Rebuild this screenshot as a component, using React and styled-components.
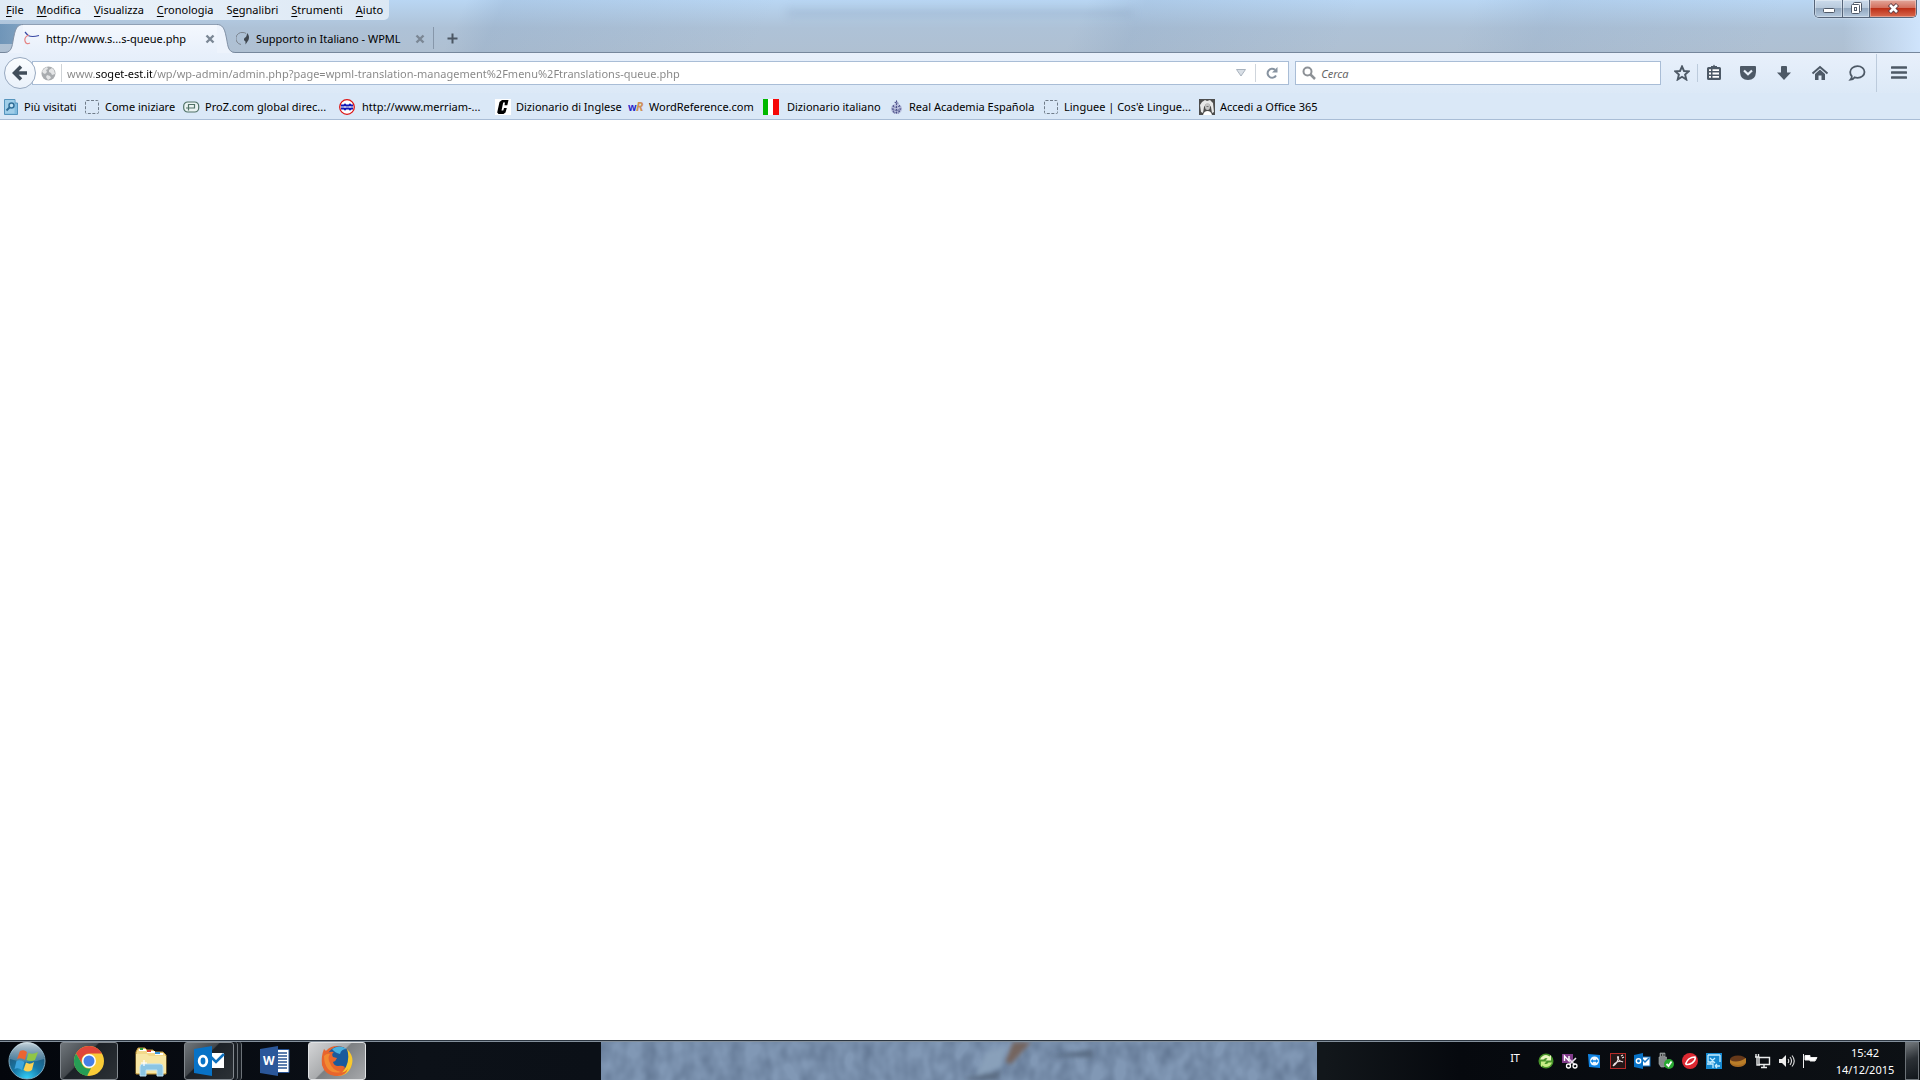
import React, { useState } from "react";
import styled, { createGlobalStyle } from "styled-components";

const GlobalStyle = createGlobalStyle`
  * { box-sizing: border-box; }
  body {
    margin: 0;
    font-family: "Noto Sans", "Open Sans", sans-serif;
    font-size: 11px;
    line-height: 16px;
    color: #000;
  }
  button, input {
    font: inherit;
    color: inherit;
    border: 0;
    padding: 0;
    margin: 0;
    background: none;
  }
  svg { display: block; flex: none; }
`;

/* ---------- window ---------- */

const Screen = styled.div`
  min-height: 100vh;
  display: flex;
  flex-direction: column;
  background: #fff;
`;

const TitleBar = styled.header`
  position: relative;
  background:
    linear-gradient(90deg, rgba(70, 120, 165, 0.6) 0, rgba(70, 120, 165, 0) 90px) 0 24px / 100% 20px no-repeat,
    linear-gradient(90deg, rgba(207, 228, 252, 0) 96%, #cfe4fc 100%),
    linear-gradient(115deg, transparent 24%, rgba(120, 150, 185, 0.2) 26%, transparent 40%, transparent 56%, rgba(120, 150, 185, 0.2) 59%, transparent 70%, transparent 76%, rgba(120, 150, 185, 0.15) 80%, transparent 92%),
    linear-gradient(#b9d6f3 0, #b5cfe9 10px, #aec2d7 28px, #afc0d2 100%);
  border-bottom: 1px solid #76879c;
`;

const TopRow = styled.div`
  display: flex;
  justify-content: space-between;
  align-items: flex-start;
  height: 24px;
`;

const MenuBar = styled.nav`
  display: flex;
  gap: 13px;
  height: 20px;
  padding: 2px 6px;
  background: linear-gradient(90deg, #dfeaf5, #eaf2fa 20%, #dce8f4);
  border-bottom-right-radius: 5px;
  u { text-underline-offset: 2px; }
`;

const MenuItem = styled.button`
  white-space: nowrap;
`;

const TitleGlow = styled.div`
  position: absolute;
  left: 41%;
  top: 9px;
  width: 18%;
  height: 8px;
  background: rgba(110, 135, 165, 0.2);
  filter: blur(4px);
`;

const WindowButtons = styled.div`
  display: flex;
  height: 18px;
  margin-right: 3px;
  border: 1px solid #56657a;
  border-top: 0;
  border-radius: 0 0 5px 5px;
  overflow: hidden;
  box-shadow: 0 0 2px rgba(255, 255, 255, 0.8);
`;

const WindowButton = styled.button`
  display: flex;
  align-items: center;
  justify-content: center;
  width: ${(p) => (p.$close ? 47 : 27)}px;
  border-left: ${(p) => (p.$first ? "0" : "1px solid #56657a")};
  background: ${(p) =>
    p.$close
      ? "linear-gradient(#e3a79b 0, #d3705e 45%, #bd3018 50%, #d9694f 100%)"
      : "linear-gradient(#cbdbec 0, #b9cadc 45%, #93a8bf 50%, #b5c9de 100%)"};
  box-shadow: inset 0 0 0 1px rgba(255, 255, 255, 0.35);
`;

/* ---------- tabs ---------- */

const TabStrip = styled.div`
  display: flex;
  height: 28px;
  padding-left: 22px;
`;

const Tab = styled.div`
  position: relative;
  display: flex;
  align-items: center;
  width: ${(p) => (p.$active ? 196 : 215)}px;
  padding: ${(p) => (p.$active ? "0 0 0 2px" : "1px 5px 0 18px")};
  ${(p) =>
    p.$active &&
    `
    margin-bottom: -1px;
    background: linear-gradient(#f4f8fe, #e8f0fb);
    border-top: 1px solid #8fa0b5;
    z-index: 1;
  `}
`;

const TabEdge = styled.svg`
  position: absolute;
  top: -1px;
  ${(p) => (p.$right ? "right: -17px; transform: scaleX(-1);" : "left: -17px;")}
`;

const TabTitle = styled.button`
  flex: 1;
  margin-left: 6px;
  text-align: left;
  white-space: nowrap;
  overflow: hidden;
`;

const IconButton = styled.button`
  display: flex;
  align-items: center;
  justify-content: center;
  width: ${(p) => p.$w || 16}px;
  height: ${(p) => p.$h || 16}px;
`;

const Divider = styled.span`
  width: 1px;
  height: ${(p) => p.$h || 18}px;
  background: ${(p) => p.$color || "#bccbdc"};
`;

/* ---------- toolbars ---------- */

const NavBar = styled.div`
  display: flex;
  align-items: center;
  height: 40px;
  padding-left: 4px;
  background: linear-gradient(#e8f0fb, #dce9f7);
`;

const BackButton = styled.button`
  display: flex;
  align-items: center;
  justify-content: center;
  width: 32px;
  height: 32px;
  border: 1px solid #98a9c0;
  border-radius: 50%;
  background: linear-gradient(#fbfdff, #eaf1fa);
  z-index: 1;
`;

const Field = styled.div`
  display: flex;
  align-items: center;
  height: 24px;
  background: #fff;
  border: 1px solid #a9bdd6;
`;

const AddressBar = styled(Field)`
  flex: 1262;
  margin-left: -4px;
  padding-left: 8px;
`;

const SearchBar = styled(Field)`
  flex: 362;
  margin-left: 6px;
  padding-left: 6px;
`;

/* host name is drawn darker than the rest of the address */
const AddressInput = styled.input`
  flex: 1;
  padding-top: 1px;
  outline: none;
  background-image: linear-gradient(90deg, #858585 0, #858585 29px, #000 29px, #000 85px, #858585 85px);
  -webkit-background-clip: text;
  background-clip: text;
  color: transparent;
`;

const SearchInput = styled.input`
  flex: 1;
  min-width: 0;
  padding-top: 1px;
  margin-left: 5px;
  outline: none;
  &::placeholder {
    color: #666;
    font-style: italic;
    opacity: 1;
  }
`;

const Tools = styled.div`
  display: flex;
  align-items: center;
  padding-left: 6px;
`;

const BookmarkBar = styled.nav`
  display: flex;
  height: 27px;
  padding: 1px 4px 0 3px;
  background: #dae8f7;
  border-bottom: 1px solid #a9bdd6;
`;

const Bookmark = styled.a`
  display: flex;
  align-items: center;
  gap: 5px;
  width: ${(p) => p.$w}px;
  color: #000;
  text-decoration: none;
  white-space: nowrap;
`;

const Content = styled.main`
  flex: 1;
  background: #fff;
`;

/* ---------- taskbar ---------- */

const Taskbar = styled.footer`
  position: relative;
  display: flex;
  justify-content: space-between;
  height: 40px;
  background: linear-gradient(90deg, #03060c, #0c1118 22%, #0b1017 31%, #12171b 69%, #06090e 76%, #0d1115);
  border-top: 1px solid #2c3641;
  box-shadow: inset 0 1px 0 #84909c;
  color: #fff;
`;

const Wallpaper = styled.svg`
  position: absolute;
  left: 31.3%;
  top: 1px;
  width: 37.3%;
  height: 38px;
`;

const TaskList = styled.div`
  display: flex;
  align-items: center;
  padding-left: 8px;
`;

const StartButton = styled.button`
  margin-right: 14px;
`;

const TaskButton = styled.button`
  display: flex;
  align-items: center;
  justify-content: center;
  width: ${(p) => p.$w || 58}px;
  height: 38px;
  margin-right: ${(p) => p.$gap || 0}px;
  border-radius: 3px;
  ${(p) =>
    p.$open &&
    `
    border: 1px solid #83898f;
    background: linear-gradient(135deg, #70767b 0, #43484d 40%, #1c2127 42%, #2c3136 100%);
  `}
  ${(p) =>
    p.$current &&
    `
    border: 1px solid #e0e2e4;
    background: linear-gradient(135deg, #d4d5d7 0, #a9abad 45%, #7c7f82 47%, #a7a9ac 100%);
  `}
`;

const StackEdge = styled.span`
  width: 4px;
  height: 38px;
  border-right: 1px solid #6c7278;
  border-radius: 0 3px 3px 0;
  background: #1a1f25;
`;

const Tray = styled.div`
  display: flex;
  align-items: center;
`;

const Language = styled.button`
  margin: 0 16px 6px 0;
`;

const TrayIcons = styled.div`
  display: flex;
  gap: 4px;
`;

const Clock = styled.time`
  width: 85px;
  padding-left: 5px;
  line-height: 17px;
  text-align: center;
`;

const ShowDesktop = styled.button`
  width: 14px;
  height: 38px;
  margin: 1px 1px 0 0;
  border: 1px solid #6c7277;
  background: linear-gradient(160deg, #74797d, #2c3136 45%, #11161b);
`;

/* ---------- icons ---------- */

const CloseX = () => (
  <svg width="10" height="10" viewBox="0 0 10 10">
    <path d="M1.5 1.5L8.5 8.5M8.5 1.5L1.5 8.5" stroke="#7b8795" strokeWidth="2.4" />
  </svg>
);

const Blank = () => (
  <svg width="16" height="16" viewBox="0 0 16 16">
    <rect x="1.5" y="1.5" width="13" height="13" rx="1" fill="none" stroke="#707c89" strokeDasharray="3 1.5" />
  </svg>
);

const bookmarks = [
  {
    label: "Più visitati", w: 81, icon: (
      <svg width="16" height="16" viewBox="0 0 16 16">
        <path d="M1.500 .5H12V4h2.500V15.500H1.500z" fill="#82bcdf" stroke="#5594bd" />
        <rect x="2" y="1" width="9.500" height="13.500" fill="#a0cee9" />
        <circle cx="8.500" cy="6.500" r="2.500" fill="#c4e4f6" stroke="#316e98" strokeWidth="1.500" />
        <path d="M6.500 8.500L3.500 11.500" stroke="#316e98" strokeWidth="2" />
      </svg>
    ),
  },
  { label: "Come iniziare", w: 99, icon: <Blank /> },
  {
    label: "ProZ.com global direc...", w: 156, icon: (
      <svg width="17" height="16" viewBox="0 0 17 16" fill="none" stroke="#507267">
        <rect x=".7" y="3" width="15" height="10" rx="4" fill="#eaf3f2" strokeWidth="1.200" />
        <path d="M5.500 11.500V5.500H11.500V9H3" strokeWidth="1.200" />
      </svg>
    ),
  },
  {
    label: "http://www.merriam-...", w: 156, icon: (
      <svg width="18" height="16" viewBox="0 0 18 16">
        <circle cx="8" cy="8" r="7.300" fill="#fff" stroke="#dd1111" strokeWidth="1.300" />
        <path d="M2 6.500h3l1-1 1 1h3l1-1 1 1h2M2 9.500h3l1 1 1-1h3l1 1 1-1h2" fill="none" stroke="#1118b8" strokeWidth="1.900" />
      </svg>
    ),
  },
  {
    label: "Dizionario di Inglese", w: 133, icon: (
      <svg width="16" height="16" viewBox="0 0 16 16">
        <rect width="16" height="16" fill="#fff" />
        <path d="M13.500 1L12.300 6.200H9.500L10 3.500H8.200L6.500 11.500H8.300L9 9H11.800L10.500 13.500 8.500 15H3.500L2.200 13.500 4.500 3 7 1z" />
      </svg>
    ),
  },
  {
    label: "WordReference.com", w: 135, icon: (
      <svg width="16" height="16" viewBox="0 0 16 16">
        <text x="0" y="12" fontSize="10" fontWeight="bold" fill="#2927c8">w</text>
        <text x="8" y="12" fontSize="12" fontStyle="italic" fontWeight="bold" fill="#ce9156">R</text>
      </svg>
    ),
  },
  {
    label: "Dizionario italiano", w: 126, icon: (
      <svg width="19" height="16" viewBox="0 0 19 16">
        <rect width="16" height="16" fill="#fff" />
        <rect width="5" height="16" fill="#00b800" />
        <rect x="10" width="6" height="16" fill="#f60808" />
      </svg>
    ),
  },
  {
    label: "Real Academia Española", w: 154, icon: (
      <svg width="15" height="16" viewBox="0 0 16 16">
        <path d="M8 1L10 3 9.500 4.500Q14 6 14 10.500 13 15.500 8 15.500 3 15.500 2 10.500 2 6 6.500 4.500L6 3z" fill="#b9bfdd" />
        <path d="M8 1v14M6 3l4 1M4 7q4 3 8-1M3 10q5 3 10 0M4 13q4 2 8-1M5 6q-2 4 1 9M11 6q2 4-1 9" fill="none" stroke="#464c85" strokeWidth="1" strokeDasharray="2 1" />
      </svg>
    ),
  },
  { label: "Linguee | Cos'è Lingue...", w: 156, icon: <Blank /> },
  {
    label: "Accedi a Office 365", w: 126, icon: (
      <svg width="16" height="16" viewBox="0 0 16 16">
        <rect width="16" height="16" fill="#4d4d4d" />
        <path d="M1 6L3 3 6 1 8 2 11 1 14 4 15 13 13 14 12 8 10 5H7L5 8 4 14 2 13z" fill="#e8e8e8" />
        <ellipse cx="8.500" cy="7.500" rx="2.500" ry="3.500" fill="#c4c4c4" />
        <path d="M4 16Q5 12 8.500 12T13 16z" fill="#fff" />
        <path d="M7.500 7h2v1h-2z" fill="#777" />
      </svg>
    ),
  },
];

const menus = [["", "F", "ile"], ["", "M", "odifica"], ["", "V", "isualizza"], ["", "C", "ronologia"], ["S", "e", "gnalibri"], ["", "S", "trumenti"], ["", "A", "iuto"]];

const tools = [
  ["Elenco segnalibri", 32, (
    <>
      <path d="M6 3V2h2l1-1.500L10 2h2v1h2.500Q16 3 16 4.500V14.500Q16 16 14.500 16H3.500Q2 16 2 14.500V4.500Q2 3 3.500 3z" />
      <path d="M4 6.200h2M7.500 6.200H14M4 9.500h2M7.500 9.500H14M4 12.800h2M7.500 12.800H14" stroke="#fff" strokeWidth="1.800" />
    </>
  )],
  ["Pocket", 36, (
    <>
      <path d="M2 2H16Q17 2 17 3V8Q16.500 16 9 16 1.500 16 1 8V3Q1 2 2 2z" />
      <path d="M5 6.500L9 10.300 13 6.500" fill="none" stroke="#e9f1fa" strokeWidth="2.200" />
    </>
  )],
  ["Download", 36, <path d="M6 3Q6 2 7 2H11Q12 2 12 3V8.500H16L9 16 2 8.500H6z" />],
  ["Pagina iniziale", 36, (
    <>
      <path d="M1.500 9.500L9 3 16.500 9.500" fill="none" stroke="#4d5966" strokeWidth="2" />
      <path d="M4 10L9 5.500 14 10V16H10.500V11.500H7.500V16H4z" />
    </>
  )],
  ["Chat", 38, <path d="M9.500 2.200C13.500 2.200 16.500 4.800 16.500 8S13.500 13.800 9.500 13.800Q8 13.800 6.500 13.400 5 15.500 2.500 15.700 4 14 3.800 12.200 2.200 10.800 2.200 8C2.200 4.800 5.500 2.200 9.500 2.200z" fill="none" stroke="#4d5966" strokeWidth="1.800" />],
];

const trayIcons = [
  ["Sincronizzazione", (
    <>
      <circle cx="10" cy="10" r="7.500" fill="#48952a" />
      <path d="M4 8.500Q6 4 10 4 12 4 13.500 5.500L15 4V9.500H9.500L11.500 7.500Q9.500 6 7.500 8.500z" fill="#e9f6bd" />
      <path d="M16 11.500Q14 16 10 16 8 16 6.500 14.500L5 16V10.500H10.500L8.500 12.500Q10.500 14 12.500 11.500z" fill="#c6ec85" />
    </>
  )],
  ["OneNote", (
    <>
      <rect x="2" y="3" width="11" height="9" fill="#823c8c" />
      <path d="M4.500 10V5L9 10V5" fill="none" stroke="#fff" strokeWidth="1.400" />
      <path d="M8 7L15 14M16 7L9 14" stroke="#e6e0e9" strokeWidth="1.600" />
      <circle cx="8.500" cy="15" r="2" fill="none" stroke="#fff" strokeWidth="1.300" />
      <circle cx="15" cy="15" r="2" fill="none" stroke="#fff" strokeWidth="1.300" />
    </>
  )],
  ["TeamViewer", (
    <>
      <path d="M4 3L16 4V17L5 16z" fill="#1184e3" />
      <circle cx="10.500" cy="10" r="4.500" fill="#f2f8fd" />
      <path d="M6.500 10l2.500-2v1.300h3V8l2.500 2-2.500 2v-1.300H9V12z" fill="#1184e3" />
    </>
  )],
  ["Acrobat", (
    <>
      <rect x="2.500" y="2.500" width="15" height="15" fill="#251717" stroke="#b52a27" />
      <path d="M5 15Q9 13 10.500 7 10.500 5 9.500 6 9.500 9.500 15 11 13 9.500 9 11 6 12.500 5 15M13 5l2-1M14 7l2-1" fill="none" stroke="#ece3e3" strokeWidth="1.100" />
    </>
  )],
  ["Outlook", (
    <>
      <rect x="9" y="6" width="9" height="9" fill="#fff" stroke="#1676c5" />
      <path d="M10 8l3 3 4-4" fill="none" stroke="#1676c5" strokeWidth="1.500" />
      <path d="M2 4L11 2V18L2 16z" fill="#0872c6" />
      <circle cx="6.500" cy="10" r="2.200" fill="none" stroke="#fff" strokeWidth="1.500" />
    </>
  )],
  ["Rimozione sicura dell'hardware", (
    <>
      <path d="M4 2h5v4h1.500v8L8 16H5L3 13V6h1z" fill="#85898b" stroke="#aaaeb0" strokeWidth=".6" />
      <path d="M5 3h1v2H5zM7.500 3h1v2h-1z" fill="#333" />
      <circle cx="13" cy="13" r="5" fill="#29a832" />
      <path d="M10.500 13l2 2 3-4.500" fill="none" stroke="#fff" strokeWidth="1.800" />
    </>
  )],
  ["Antivirus", (
    <>
      <circle cx="10" cy="10" r="8" fill="#dc2831" />
      <path d="M5.500 13Q8 6 15 6 16 9 12 12 8 14.500 5.500 13" fill="none" stroke="#fff" strokeWidth="1.600" />
    </>
  )],
  ["Grafica", (
    <>
      <rect x="2" y="2" width="16" height="16" fill="#1688cf" />
      <path d="M4 4h12M4 4v7h6M16 4v7M6 7l5 5M11 7l-5 5M3 13h6v4M11 15h5M11 15l2-2M11 15l2 2" fill="none" stroke="#c4ecff" strokeWidth="1.300" />
    </>
  )],
  ["Disco", (
    <>
      <path d="M2 8V12Q4 16 10 16T18 12V8z" fill="#a96c23" />
      <ellipse cx="10" cy="8.500" rx="8" ry="4" fill="#66391a" />
      <path d="M2 9Q9 13 18 7V11Q16 14 10 14 4 14 2 11z" fill="#b97d28" />
    </>
  )],
  ["Rete", <path d="M7 6.500H17.500V13.500H7zM12 14v2.500M9 16.500h6M4 3v3M6.500 3v3M3 6h4.500M5 6v8H8" fill="none" stroke="#e9ebec" strokeWidth="1.400" />],
  ["Volume", (
    <>
      <path d="M3 8H6L10 4V16L6 12H3z" fill="#ededed" />
      <path d="M12 8q1.500 2 0 4M14 6q3 4 0 8M16 4.500q4.500 5.500 0 11" fill="none" stroke="#ddd" strokeWidth="1.100" />
    </>
  )],
  ["Centro operativo", <path d="M3.500 3V17M5 4.500H10V6.500H17L15 10H10V9H5z" fill="#fff" stroke="#eee" strokeWidth="1" />],
];

const ChromeIcon = () => (
  <svg width="32" height="32" viewBox="0 0 32 32">
    <circle cx="16" cy="16" r="15" fill="#f9cb37" />
    <path d="M3 8.500A15 15 0 0 1 29 8.500H16A7.500 7.500 0 0 0 9.500 19.700z" fill="#df463a" />
    <path d="M3 8.500L9.500 19.700A7.500 7.500 0 0 0 18 23.200L14 31A15 15 0 0 1 3 8.500z" fill="#269d55" />
    <circle cx="16" cy="16" r="7" fill="#fff" />
    <circle cx="16" cy="16" r="5.500" fill="#477fe7" />
  </svg>
);

const ExplorerIcon = () => (
  <svg width="34" height="32" viewBox="0 0 34 32">
    <path d="M2 7L4 3H11L13 5H19L21 7H29L32 10V29H2z" fill="#f3d98a" stroke="#bd943b" />
    <path d="M5 4h7v2H5zM13 6h8v2h-8zM21 8h8v2h-8z" fill="#fff" />
    <path d="M6 3h3v2H6z" fill="#2e9f3d" /><path d="M13 5h4v2h-4z" fill="#d74131" /><path d="M21 7h5v2h-5z" fill="#3998dc" />
    <path d="M2 9h11l2 2h17v17H2z" fill="#f7e6a4" />
    <path d="M6 31V22Q6 19 9 19H26Q29 19 29 22V31H23V25H12V31z" fill="#8bc5e4" stroke="#bfe2f3" strokeWidth="1" />
    <path d="M10 15v6M7 18h6" stroke="#fff" strokeWidth="1.200" />
  </svg>
);

const OutlookIcon = () => (
  <svg width="32" height="32" viewBox="0 0 32 32">
    <rect x="17" y="8" width="14" height="15" fill="#fff" />
    <path d="M18 12l5 5 8-8" fill="none" stroke="#0f70bd" strokeWidth="2.500" />
    <path d="M1 4L19 1V31L1 28z" fill="#0872c6" />
    <ellipse cx="10" cy="16" rx="3.800" ry="4.800" fill="none" stroke="#fff" strokeWidth="2.800" />
  </svg>
);

const WordIcon = () => (
  <svg width="32" height="32" viewBox="0 0 32 32">
    <path d="M17 4.500H30V27.500H17z" fill="#fff" stroke="#295494" />
    <path d="M19 8h9M19 11h9M19 14h9M19 17h9M19 20h9M19 23h9" stroke="#295494" strokeWidth="1.300" />
    <path d="M1 4L19 1V31L1 28z" fill="#2b579a" />
    <text x="4" y="20" fontSize="12" fontWeight="bold" fill="#fff">W</text>
  </svg>
);

const FirefoxIcon = () => (
  <svg width="32" height="32" viewBox="0 0 32 32">
    <circle cx="16" cy="16" r="15" fill="#e8652d" />
    <circle cx="18" cy="13" r="11.500" fill="#1b5a9c" />
    <path d="M11 4Q18-1 26 4 20 4 19 9 14 8 11 4z" fill="#49b1df" />
    <path d="M26 4Q33 11 31 19 28 31 16 31 22 28 25 22 29 13 26 4z" fill="#f7c92e" />
    <path d="M3 4L7 8Q9 6 13 7 10 9 12 12L16 13Q15 16 12 17 13 21 17 21 21 20 24 22 21 27 15 27 24 29 27 23 25 31 16 31 4 31 1 20 0 11 3 4z" fill="#e8652d" />
    <path d="M3 11Q6 8 9 9 6 13 9 18 11 25 20 27 12 29 7 24 3 19 3 11z" fill="#f28a31" />
  </svg>
);

const StartOrb = () => (
  <svg width="38" height="38" viewBox="0 0 38 38">
    <defs>
      <radialGradient id="orb" cx=".5" cy="1" r=".9">
        <stop offset="0" stopColor="#35d4fb" /><stop offset=".45" stopColor="#1779a9" /><stop offset="1" stopColor="#234d6c" />
      </radialGradient>
      <linearGradient id="shine" x2="0" y2="1">
        <stop stopColor="#dce8ed" stopOpacity=".9" /><stop offset="1" stopColor="#96b4c7" stopOpacity=".3" />
      </linearGradient>
    </defs>
    <circle cx="19" cy="19" r="18" fill="url(#orb)" stroke="#7eaac1" />
    <path d="M2 17A17 17 0 0 1 36 17Q19 23 2 17z" fill="url(#shine)" />
    <path d="M12 9Q16 7 19 10L17 18Q13 15 9 17z" fill="#ec6531" />
    <path d="M20.500 11Q25 13 30 10L27 18Q23 20 18.500 18z" fill="#90c646" />
    <path d="M8.500 19Q12 17 16.500 20L14 28Q10 25 6.500 27z" fill="#3da4dd" />
    <path d="M18 20.500Q22 23 26 20L24 28Q20 31 15.500 28z" fill="#fcd152" />
  </svg>
);

const Edge = ({ right }) => (
  <TabEdge $right={right} width="18" height="29" viewBox="0 0 18 29">
    <path d="M0 29C8 28 7 20 9 12 10.500 4 13 .5 18 .5V29z" fill="#edf3fc" />
    <path d="M0 28.500C8 28 7 20 9 12 10.500 4 13 .5 18 .5" fill="none" stroke="#8191a6" />
  </TabEdge>
);

const App = () => {
  const [address, setAddress] = useState("www.soget-est.it/wp/wp-admin/admin.php?page=wpml-translation-management%2Fmenu%2Ftranslations-queue.php");

  return (
    <Screen>
      <GlobalStyle />
      <TitleBar>
        <TitleGlow />
        <TopRow>
          <MenuBar>
            {menus.map(([before, key, after]) => (
              <MenuItem key={key + after}>{before}<u>{key}</u>{after}</MenuItem>
            ))}
          </MenuBar>
          <WindowButtons>
            <WindowButton $first aria-label="Riduci a icona">
              <svg width="13" height="13" viewBox="0 0 13 13">
                <rect x="1.500" y="6.500" width="11" height="4" rx="1" fill="#fff" stroke="#4f5968" />
              </svg>
            </WindowButton>
            <WindowButton aria-label="Ripristina">
              <svg width="13" height="13" viewBox="0 0 13 13" fill="#fff" stroke="#4f5968">
                <rect x="3.500" y=".5" width="8" height="9" rx="1" />
                <rect x="1.500" y="2.500" width="8" height="9" rx="1" />
                <rect x="4.500" y="5.500" width="2" height="3" />
              </svg>
            </WindowButton>
            <WindowButton $close aria-label="Chiudi">
              <svg width="13" height="13" viewBox="0 0 13 13">
                <path d="M2.500 2.500L10.500 10.500M10.500 2.500L2.500 10.500" stroke="#5d3a41" strokeWidth="4.500" />
                <path d="M3 3L10 10M10 3L3 10" stroke="#fff" strokeWidth="2.600" />
              </svg>
            </WindowButton>
          </WindowButtons>
        </TopRow>
        <TabStrip>
          <Tab $active>
            <Edge />
            <svg width="16" height="16" viewBox="0 0 16 16" fill="none">
              <path d="M1 1L4 4.500Q8 6.500 15 4.500" stroke="#3848a4" strokeWidth="1.200" />
              <path d="M5 4Q0 6 1 10 2 14 6 12" stroke="#e58585" strokeWidth="1.200" />
            </svg>
            <TabTitle>http://www.s...s-queue.php</TabTitle>
            <IconButton aria-label="Chiudi scheda"><CloseX /></IconButton>
            <Edge right />
          </Tab>
          <Tab>
            <svg width="14" height="16" viewBox="0 0 14 16">
              <path d="M5 13.500A6 6 0 0 1 7 1.500Q9 1.500 10 2.500" fill="none" stroke="#7c848e" />
              <path d="M11 2Q14 5 12.500 9L9.500 13.500 9.500 10.500Q7 9 8.500 7 11 6 11 2z" fill="#3f464e" />
            </svg>
            <TabTitle>Supporto in Italiano - WPML</TabTitle>
            <IconButton aria-label="Chiudi scheda"><CloseX /></IconButton>
          </Tab>
          <IconButton as="span" $w={1} $h={28}><Divider $h={22} $color="#8797aa" /></IconButton>
          <IconButton $w={36} $h={28} aria-label="Nuova scheda">
            <svg width="11" height="11" viewBox="0 0 11 11"><path d="M5.500 0.500V10.500M.5 5.500H10.500" stroke="#4b5663" strokeWidth="2" /></svg>
          </IconButton>
        </TabStrip>
      </TitleBar>

      <NavBar>
        <BackButton aria-label="Indietro">
          <svg width="16" height="16" viewBox="0 0 16 16"><path d="M9 1.500L2.500 8 9 14.500M3 8H15" fill="none" stroke="#414d5a" strokeWidth="3.500" /></svg>
        </BackButton>
        <AddressBar>
          <svg width="15" height="15" viewBox="0 0 15 15">
            <circle cx="7.500" cy="7.500" r="7" fill="#a9acaf" />
            <path d="M1 5L4 2 6 1 7 3 5 4 6 6 4 8 2 7zM8 4l3-2 2 2 1 4-3 1-1-2-2-1zM6 9l3 1 1 2-3 2-2-3z" fill="#e4e5e6" />
          </svg>
          <IconButton as="span" $w={11}><Divider $color="#cfd3d7" /></IconButton>
          <AddressInput aria-label="Indirizzo" value={address} onChange={(e) => setAddress(e.target.value)} />
          <IconButton $w={28} aria-label="Cronologia indirizzi">
            <svg width="10" height="8" viewBox="0 0 10 8"><path d="M.5.5H9.500L5 7z" fill="#d9dfe6" stroke="#a9b3be" /></svg>
          </IconButton>
          <Divider $color="#cfd5dc" />
          <IconButton $w={32} aria-label="Ricarica">
            <svg width="12" height="12" viewBox="0 0 12 12">
              <path d="M10 8.500A4.500 4.500 0 1 1 9 2.800" fill="none" stroke="#8793a0" strokeWidth="2" />
              <path d="M11.500 0V5.500H6z" fill="#8793a0" />
            </svg>
          </IconButton>
        </AddressBar>
        <SearchBar>
          <svg width="14" height="14" viewBox="0 0 14 14" fill="none" stroke="#8d9196">
            <circle cx="5.500" cy="5.500" r="4" strokeWidth="2" />
            <path d="M8.500 8.500L13 13" strokeWidth="2.500" />
          </svg>
          <SearchInput aria-label="Cerca" placeholder="Cerca" />
        </SearchBar>
        <Tools>
          <IconButton $w={30} $h={24} aria-label="Aggiungi ai segnalibri">
            <svg width="16" height="16" viewBox="0 0 16 16">
              <path d="M8 1.500L10 6 14.700 6.300 11.100 9.500 12.300 14.500 8 11.800 3.700 14.500 4.900 9.500 1.300 6.300 6 6z" fill="none" stroke="#4d5966" strokeWidth="1.900" />
            </svg>
          </IconButton>
          <Divider />
          {tools.map(([name, w, shape]) => (
            <IconButton key={name} $w={w} $h={24} aria-label={name}>
              <svg width="18" height="18" viewBox="0 0 18 18" fill="#4d5966">{shape}</svg>
            </IconButton>
          ))}
          <Divider $h={38} />
          <IconButton $w={43} $h={24} aria-label="Apri menu">
            <svg width="16" height="16" viewBox="0 0 16 16"><path d="M1 2.500H15M1 7.500H15M1 12.500H15" stroke="#4d5966" strokeWidth="2.600" strokeLinecap="round" /></svg>
          </IconButton>
        </Tools>
      </NavBar>

      <BookmarkBar>
        {bookmarks.map((b) => (
          <Bookmark key={b.label} href="#" $w={b.w}>{b.icon}{b.label}</Bookmark>
        ))}
      </BookmarkBar>

      <Content />

      <Taskbar>
        <Wallpaper preserveAspectRatio="none" viewBox="0 0 716 38">
          <defs>
            <filter id="grain" x="0" y="0" width="1" height="1" colorInterpolationFilters="sRGB">
              <feTurbulence type="fractalNoise" baseFrequency=".07 .05" numOctaves="2" seed="4" />
              <feColorMatrix values="0 0 0 0 .35  0 0 0 0 .43  0 0 0 0 .54  1.200 0 0 0 -.35" />
            </filter>
            <filter id="soft"><feGaussianBlur stdDeviation="2" /></filter>
          </defs>
          <rect width="716" height="38" fill="#8198b5" />
          <rect width="716" height="38" filter="url(#grain)" />
          <g filter="url(#soft)">
            <path d="M412 0H430L410 22 404 20z" fill="#75655f" />
            <path d="M385 10L405 5 400 25 375 34z" fill="#89a0ba" />
            <path d="M365 36L400 29 396 38H365z" fill="#5b6d83" />
            <path d="M450 14L492 7V16z" fill="#5b6e86" />
          </g>
        </Wallpaper>
        <TaskList>
          <StartButton aria-label="Start"><StartOrb /></StartButton>
          <TaskButton $open $gap={4} aria-label="Chrome"><ChromeIcon /></TaskButton>
          <TaskButton $gap={4} aria-label="Esplora risorse"><ExplorerIcon /></TaskButton>
          <TaskButton $open $w={50} aria-label="Outlook"><OutlookIcon /></TaskButton>
          <StackEdge />
          <StackEdge />
          <TaskButton $w={66} aria-label="Word"><WordIcon /></TaskButton>
          <TaskButton $current aria-label="Firefox"><FirefoxIcon /></TaskButton>
        </TaskList>
        <Tray>
          <Language>IT</Language>
          <TrayIcons>
            {trayIcons.map(([name, shape]) => (
              <IconButton key={name} $w={20} $h={20} aria-label={name}>
                <svg width="20" height="20" viewBox="0 0 20 20">{shape}</svg>
              </IconButton>
            ))}
          </TrayIcons>
          <Clock>15:42<br />14/12/2015</Clock>
          <ShowDesktop aria-label="Mostra desktop" />
        </Tray>
      </Taskbar>
    </Screen>
  );
};

export default App;
